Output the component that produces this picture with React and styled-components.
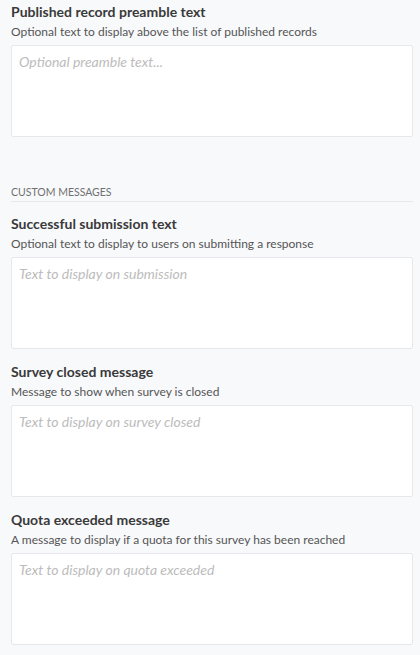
import React from "react";
import styled, { createGlobalStyle } from "styled-components";

const GlobalStyle = createGlobalStyle`
  body {
    margin: 0;
    background: #f8f9fb;
    font-family: Lato, "Open Sans", sans-serif;
  }
`;

const fields = [
  {
    title: "Successful submission text",
    hint: "Optional text to display to users on submitting a response",
    placeholder: "Text to display on submission",
  },
  {
    title: "Survey closed message",
    hint: "Message to show when survey is closed",
    placeholder: "Text to display on survey closed",
  },
  {
    title: "Quota exceeded message",
    hint: "A message to display if a quota for this survey has been reached",
    placeholder: "Text to display on quota exceeded",
  },
];

function Field({ title, hint, placeholder }) {
  return (
    <FieldStyle>
      <Label>{title}</Label>
      <Hint>{hint}</Hint>
      <TextArea placeholder={placeholder} />
    </FieldStyle>
  );
}

function App() {
  return (
    <Page>
      <GlobalStyle />
      <Field
        title="Published record preamble text"
        hint="Optional text to display above the list of published records"
        placeholder="Optional preamble text..."
      />
      <SectionHeading>Custom messages</SectionHeading>
      {fields.map((f) => (
        <Field key={f.title} {...f} />
      ))}
    </Page>
  );
}

export default App;

const Page = styled.div`
  padding: 3px 7px 10px 11px;
  display: flex;
  flex-direction: column;
  gap: 14px;
`;

const FieldStyle = styled.div`
  display: flex;
  flex-direction: column;
`;

const Label = styled.div`
  font-size: 14px;
  font-weight: 700;
  line-height: 18px;
  color: #3a3a3a;
`;

const Hint = styled.div`
  margin-top: 3px;
  font-size: 12px;
  line-height: 16px;
  color: #555;
  margin-bottom: 5px;
`;

const TextArea = styled.textarea`
  box-sizing: border-box;
  display: block;
  width: 100%;
  height: 92px;
  margin: 0;
  padding: 7px 7px;
  border: 1px solid #e6e8eb;
  border-radius: 2px;
  background: #fff;
  font-family: Lato, "Open Sans", sans-serif;
  font-size: 14px;
  color: #333;
  resize: none;
  outline: none;

  &::placeholder {
    color: #bcbcbc;
    font-style: italic;
  }
`;

const SectionHeading = styled.div`
  margin-top: 34px;
  margin-bottom: -1px;
  padding-bottom: 2px;
  border-bottom: 1px solid #e6e8eb;
  font-size: 10.5px;
  line-height: 14px;
  text-transform: uppercase;
  color: #707070;
`;
